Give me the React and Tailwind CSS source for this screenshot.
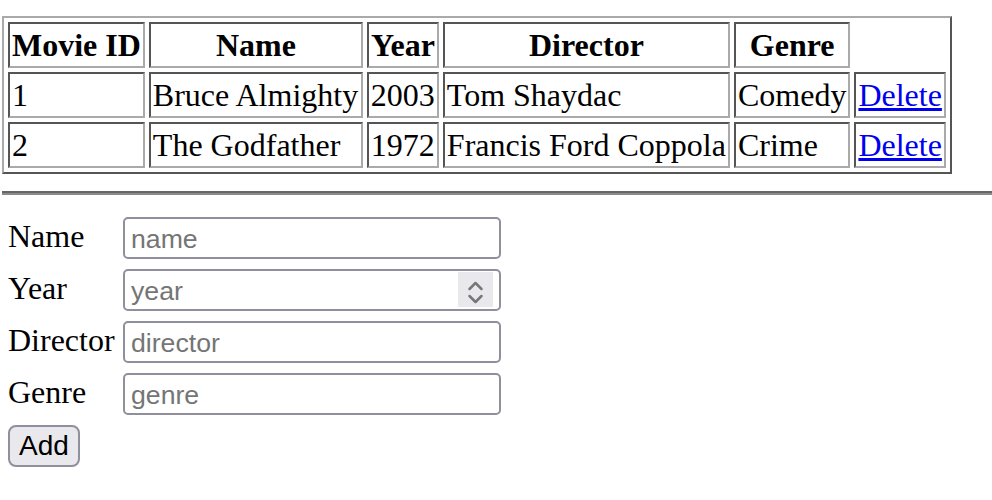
import React from 'react';

const movies = [
    { id: 1, name: 'Bruce Almighty', year: 2003, director: 'Tom Shaydac', genre: 'Comedy' },
    { id: 2, name: 'The Godfather', year: 1972, director: 'Francis Ford Coppola', genre: 'Crime' },
];

const cell = 'border-2 border-t-[#555] border-l-[#555] border-r-[#aaa] border-b-[#aaa] p-[2px] leading-[38px]';

const fields = ['Name', 'Year', 'Director', 'Genre'];

const App = () => {
    return (
        <div className="min-h-[500px] bg-white text-black font-['Liberation_Serif',serif] text-[32px]">
            <table className="mt-[16px] ml-[2px] border-separate border-spacing-[4px] border-2 border-t-[#aaa] border-l-[#aaa] border-r-[#555] border-b-[#555]">
                <thead>
                    <tr>
                        <th className={`${cell} font-bold text-center`}>Movie ID</th>
                        <th className={`${cell} w-[214px] font-bold text-center`}>Name</th>
                        <th className={`${cell} font-bold text-center`}>Year</th>
                        <th className={`${cell} font-bold text-center`}>Director</th>
                        <th className={`${cell} font-bold text-center`}>Genre</th>
                    </tr>
                </thead>
                <tbody>
                    {movies.map((m) => (
                        <tr key={m.id}>
                            <td className={cell}>{m.id}</td>
                            <td className={cell}>{m.name}</td>
                            <td className={cell}>{m.year}</td>
                            <td className={cell}>{m.director}</td>
                            <td className={cell}>{m.genre}</td>
                            <td className={`${cell} w-[91px]`}>
                                <a href="#" className="text-[#0000ee] underline">Delete</a>
                            </td>
                        </tr>
                    ))}
                </tbody>
            </table>

            <div className="mt-[17px] ml-[2px] h-[4px] border-t-2 border-t-[#666] border-b-2 border-b-[#8a8a8a]" />

            <div className="mt-[22px] ml-[8px] flex flex-col gap-[10px]">
                {fields.map((f) => (
                    <div key={f} className="flex items-start h-[42px]">
                        <span className="w-[115px] pt-[1px] leading-[1.15]">{f}</span>
                        <div className="relative">
                            <input
                                type="text"
                                placeholder={f.toLowerCase()}
                                className="block w-[378px] h-[42px] border-2 border-[#8f8f9d] rounded-[5px] pl-[6px] pt-[3px] font-['Liberation_Sans',sans-serif] text-[26.67px] text-black placeholder:text-[#757575] outline-none"
                            />
                            {f === 'Year' && (
                                <span className="absolute left-[335px] top-[3px] w-[35px] h-[35px] bg-[#e9e9ed]">
                                    <svg width="35" height="35" viewBox="0 0 35 35" fill="none" stroke="#777" strokeWidth="2.5" strokeLinecap="round" strokeLinejoin="round">
                                        <path d="M11.5 17 L17.5 11 L23.5 17" />
                                        <path d="M11.5 24 L17.5 30 L23.5 24" />
                                    </svg>
                                </span>
                            )}
                        </div>
                    </div>
                ))}
                <button className="w-[72px] h-[42px] bg-[#e9e9ed] border-2 border-[#8f8f9d] rounded-[8px] font-['Liberation_Sans',sans-serif] text-[28px] text-black leading-none">
                    Add
                </button>
            </div>
        </div>
    );
};

export default App;
